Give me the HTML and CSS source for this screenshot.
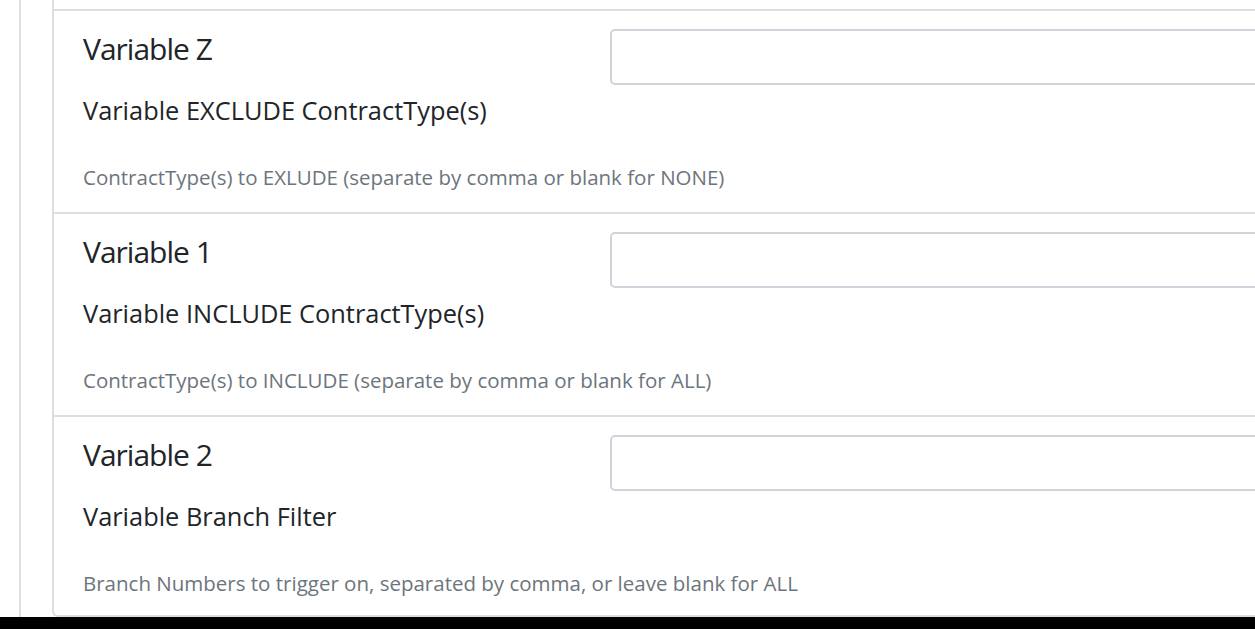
FILE: index.html
```html
<!DOCTYPE html>
<html>
<head>
<meta charset="utf-8">
<link rel="stylesheet" href="styles.css">
</head>
<body>
<div class="page">
  <div class="outer">
    <div class="card">
      <div class="top-stub"></div>
      <div class="row">
        <div class="info">
          <h4 class="title">Variable Z</h4>
          <div class="label">Variable EXCLUDE ContractType(s)</div>
          <div class="help">ContractType(s) to EXLUDE (separate by comma or blank for NONE)</div>
        </div>
        <div class="field"><input class="input" type="text"></div>
      </div>
      <div class="row">
        <div class="info">
          <h4 class="title">Variable 1</h4>
          <div class="label">Variable INCLUDE ContractType(s)</div>
          <div class="help">ContractType(s) to INCLUDE (separate by comma or blank for ALL)</div>
        </div>
        <div class="field"><input class="input" type="text"></div>
      </div>
      <div class="row">
        <div class="info">
          <h4 class="title">Variable 2</h4>
          <div class="label">Variable Branch Filter</div>
          <div class="help">Branch Numbers to trigger on, separated by comma, or leave blank for ALL</div>
        </div>
        <div class="field"><input class="input" type="text"></div>
      </div>
    </div>
  </div>
  <div class="taskbar"></div>
</div>
</body>
</html>
```
FILE: styles.css
```css
html, body {
  margin: 0;
  padding: 0;
  background: #ffffff;
  overflow: hidden;
}
.page {
  width: 1255px;
  height: 629px;
  display: flex;
  flex-direction: column;
  font-family: "Open Sans", "Noto Sans", sans-serif;
  color: #212529;
}
.outer {
  flex: 1;
  margin-left: 19px;
  border-left: 2px solid #dedede;
  padding-left: 31px;
  overflow: hidden;
  display: flex;
  flex-direction: column;
}
.card {
  flex: 1;
  width: 1300px;
  border-left: 2px solid #dedede;
  border-bottom: 2px solid #dedede;
  border-bottom-left-radius: 6px;
  display: flex;
  flex-direction: column;
}
.top-stub {
  height: 9px;
}
.row {
  display: flex;
  border-top: 2px solid #dedede;
  height: 201px;
  box-sizing: content-box;
}
.row:last-child {
  flex: 1;
}
.info {
  width: 527px;
  padding-left: 29px;
  flex: none;
  position: relative;
  z-index: 1;
}
.title {
  margin: 0;
  padding-top: 20px;
  font-size: 30px;
  letter-spacing: -1px;
  line-height: 36px;
  font-weight: 400;
}
.label {
  margin-top: 28px;
  font-size: 25.4px;
  line-height: 30px;
}
.help {
  margin-top: 40px;
  font-size: 20.5px;
  line-height: 24px;
  color: #6c757d;
  white-space: nowrap;
}
.field {
  flex: 1;
  padding-top: 18px;
}
.input {
  display: block;
  width: 100%;
  height: 56px;
  box-sizing: border-box;
  border: 2px solid #ced4da;
  border-radius: 5px;
  background: #fff;
  font: inherit;
}
.taskbar {
  height: 12px;
  background: #000;
  flex: none;
}
```
